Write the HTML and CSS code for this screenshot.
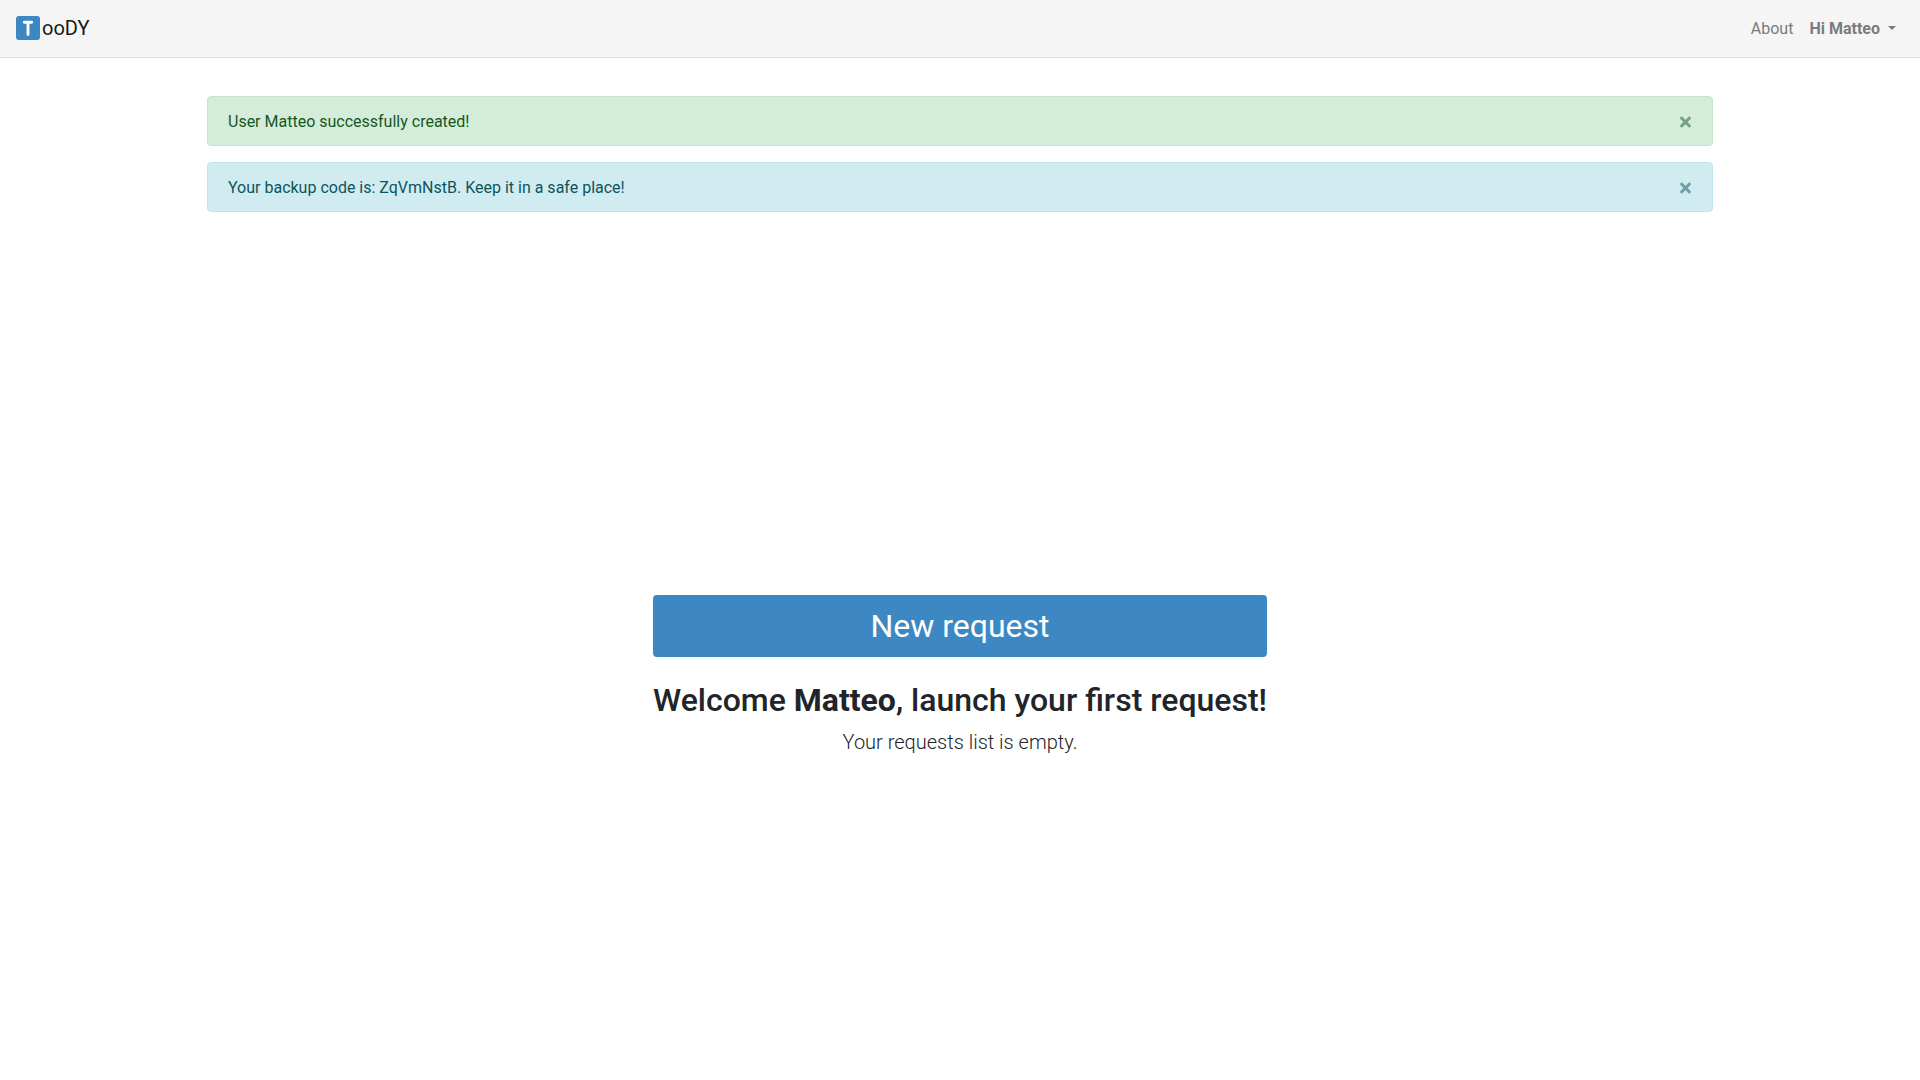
FILE: index.html
```
<!DOCTYPE html>
<html lang="en">
<head>
<meta charset="utf-8">
<meta name="viewport" content="width=device-width, initial-scale=1">
<title>TooDY</title>
<link rel="stylesheet" href="styles.css">
</head>
<body>
<nav class="navbar">
  <a class="brand" href="#" aria-label="TooDY">
    <svg class="brand-logo" viewBox="0 0 24 24" aria-hidden="true">
      <rect width="24" height="24" rx="3" fill="#3d88c3"/>
      <path d="M8.300 6.200h7.400M12 6.200v12.300" fill="none" stroke="#fff" stroke-width="2.900" stroke-linecap="round"/>
    </svg>
    <span>ooDY</span>
  </a>
  <div class="nav-links">
    <a class="nav-link" href="#">About</a>
    <button class="nav-link nav-user" type="button" aria-haspopup="true">Hi Matteo<span class="caret"></span></button>
  </div>
</nav>
<section class="alerts">
  <div class="alert alert-success" role="alert">
    <span>User Matteo successfully created!</span>
    <button class="close" type="button" aria-label="Close">
      <svg class="close-icon" viewBox="0 0 352 512" aria-hidden="true"><path fill="currentColor" d="M242.72 256l100.070-100.070c12.280-12.280 12.280-32.190 0-44.480l-22.240-22.240c-12.280-12.280-32.190-12.280-44.480 0L176 189.280 75.930 89.210c-12.280-12.280-32.190-12.280-44.480 0L9.210 111.450c-12.280 12.280-12.280 32.190 0 44.480L109.280 256 9.210 356.070c-12.280 12.280-12.280 32.190 0 44.480l22.240 22.240c12.280 12.280 32.200 12.280 44.480 0L176 322.720l100.070 100.070c12.280 12.280 32.200 12.280 44.480 0l22.240-22.240c12.280-12.280 12.280-32.190 0-44.480L242.720 256z"/></svg>
    </button>
  </div>
  <div class="alert alert-info" role="alert">
    <span>Your backup code is: ZqVmNstB. Keep it in a safe place!</span>
    <button class="close" type="button" aria-label="Close">
      <svg class="close-icon" viewBox="0 0 352 512" aria-hidden="true"><path fill="currentColor" d="M242.72 256l100.070-100.070c12.280-12.280 12.280-32.190 0-44.480l-22.240-22.240c-12.280-12.280-32.190-12.280-44.480 0L176 189.280 75.930 89.210c-12.280-12.280-32.190-12.280-44.480 0L9.210 111.450c-12.280 12.280-12.280 32.190 0 44.480L109.280 256 9.210 356.070c-12.280 12.280-12.280 32.190 0 44.480l22.240 22.240c12.280 12.280 32.200 12.280 44.480 0L176 322.720l100.070 100.070c12.280 12.280 32.200 12.280 44.480 0l22.240-22.240c12.280-12.280 12.280-32.190 0-44.480L242.720 256z"/></svg>
    </button>
  </div>
</section>
<main class="main">
  <div class="welcome">
    <button class="btn-new" type="button">New request</button>
    <h2 class="title">Welcome <strong>Matteo</strong>, launch your first request!</h2>
    <p class="lead">Your requests list is empty.</p>
  </div>
</main>
</body>
</html>
```
FILE: styles.css
```
* { box-sizing: border-box; }
body {
  margin: 0;
  min-height: 100vh;
  display: flex;
  flex-direction: column;
  font-family: Roboto, sans-serif;
  font-size: 16px;
  line-height: 24px;
  color: #212529;
  background: #fff;
}
button {
  font: inherit;
  border: 0;
  cursor: pointer;
}
.navbar {
  display: flex;
  align-items: flex-start;
  justify-content: space-between;
  padding: 8px 16px;
  background: #f5f5f5;
  border-bottom: 1px solid #ddd;
}
.brand {
  display: flex;
  align-items: center;
  gap: 2px;
  padding: 5px 0;
  font-size: 20px;
  line-height: 30px;
  color: #191919;
  text-decoration: none;
}
.brand-logo {
  width: 24px;
  height: 24px;
}
.nav-links { display: flex; }
.nav-link {
  padding: 9px 8px 8px;
  color: #7b7b7b;
  background: none;
  text-decoration: none;
}
.nav-user {
  display: flex;
  align-items: center;
  gap: 8px;
  font-weight: 700;
}
.caret {
  margin-bottom: 2px;
  border-top: 4px solid currentColor;
  border-left: 4px solid transparent;
  border-right: 4px solid transparent;
}
.alerts {
  width: 80%;
  margin: 38px auto 0;
  padding: 0 15px;
}
.alert {
  display: flex;
  align-items: center;
  justify-content: space-between;
  margin-bottom: 16px;
  padding: 13px 21px 11px 20px;
  border: 1px solid;
  border-radius: 4px;
}
.alert-success {
  color: #155724;
  background: #d4edda;
  border-color: #c3e6cb;
}
.alert-info {
  color: #0c5460;
  background: #d1ecf1;
  border-color: #bee5eb;
}
.close {
  display: flex;
  padding: 0;
  color: inherit;
  background: none;
  opacity: .5;
}
.close-icon {
  width: 11px;
  height: 16px;
}
.main {
  flex: 1;
  display: flex;
  align-items: center;
  justify-content: center;
  padding: 59px 16px 0;
}
.welcome {
  display: flex;
  flex-direction: column;
  text-align: center;
}
.btn-new {
  padding: 7px 12px;
  font-size: 32px;
  line-height: 48px;
  color: #fff;
  background: #3d88c3;
  border-radius: 4px;
}
.title {
  margin: 24px 0 8px;
  font-size: 32px;
  line-height: 38px;
  font-weight: 500;
}
.title strong { font-weight: 700; }
.lead {
  margin: 0 0 16px;
  font-size: 20px;
  line-height: 30px;
  font-weight: 300;
}
```
